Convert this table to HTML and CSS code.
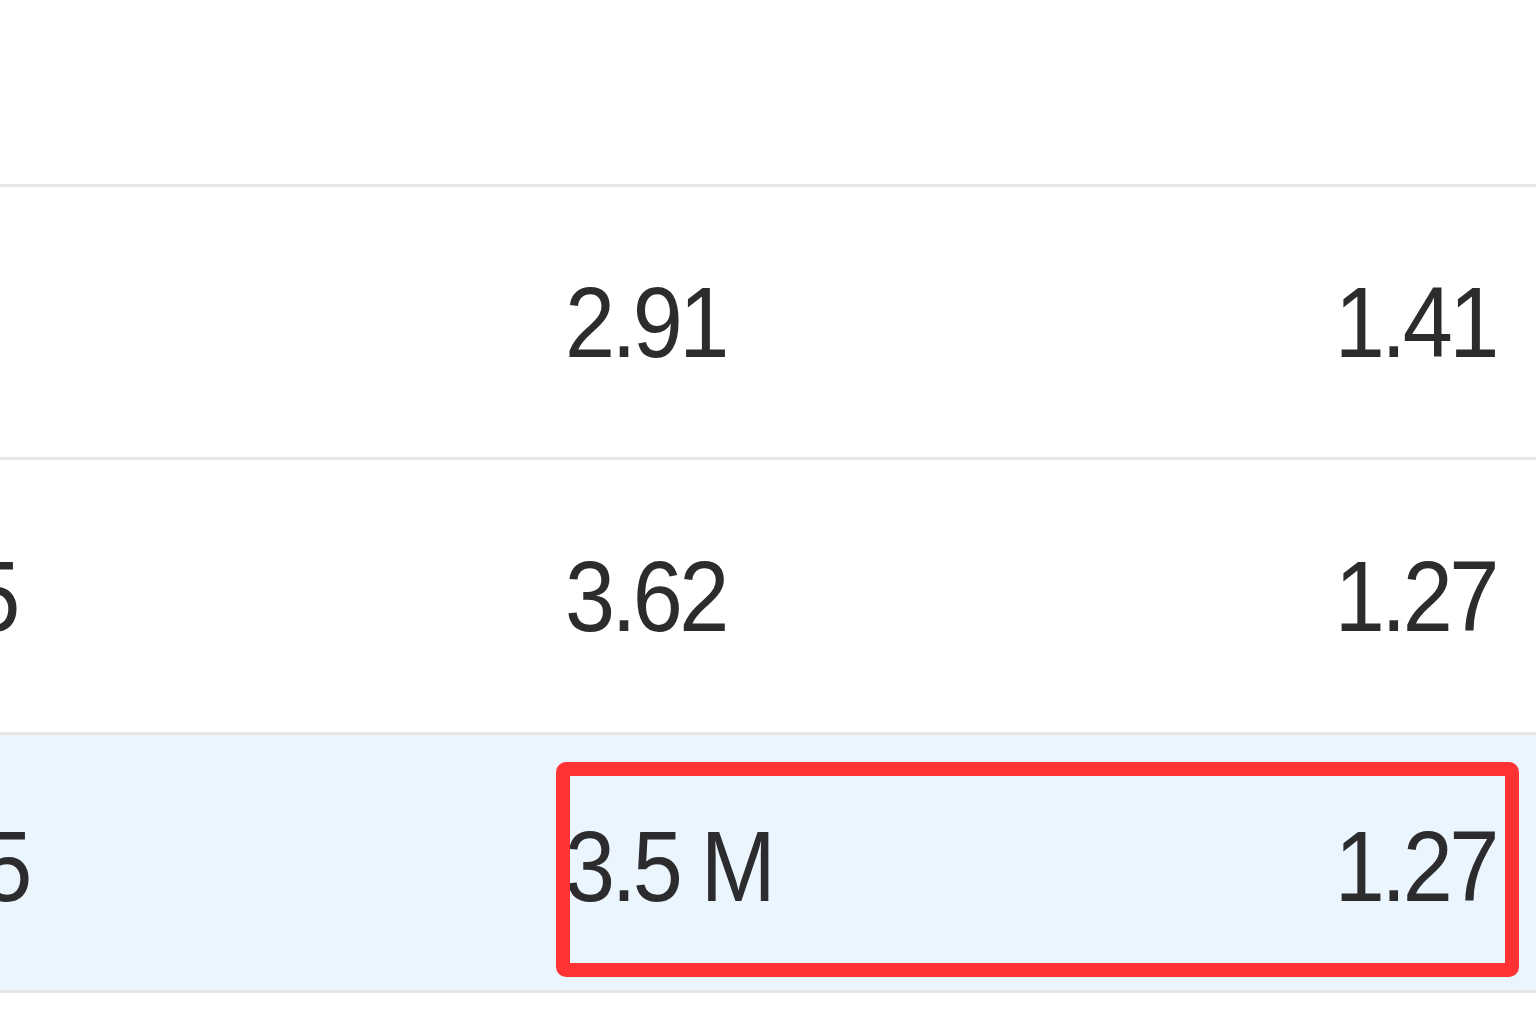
FILE: index.html
```html
<!DOCTYPE html>
<html lang="en">
<head>
<meta charset="utf-8">
<title>Table</title>
<link rel="stylesheet" href="styles.css">
</head>
<body>
<div class="table">
  <div class="row head">
    <div class="cell c1"></div>
    <div class="cell c2"></div>
    <div class="cell c3"></div>
  </div>
  <div class="row r1">
    <div class="cell c1"></div>
    <div class="cell c2"><span class="num">2.91</span></div>
    <div class="cell c3"><span class="num">1.41</span></div>
  </div>
  <div class="row r2">
    <div class="cell c1 shift"><span class="num">1.25</span></div>
    <div class="cell c2"><span class="num">3.62</span></div>
    <div class="cell c3"><span class="num">1.27</span></div>
  </div>
  <div class="row r3 selected">
    <div class="cell c1"><span class="num">1.35</span></div>
    <div class="cell c2"><span class="num">3.5 M</span></div>
    <div class="cell c3"><span class="num">1.27</span></div>
    <div class="highlight"></div>
  </div>
</div>
</body>
</html>
```
FILE: styles.css
```css
html, body {
  margin: 0;
  padding: 0;
  background: #ffffff;
}
body {
  width: 1536px;
  height: 1024px;
  overflow: hidden;
  font-family: "Liberation Sans", Arial, sans-serif;
  color: #2c2c2e;
}
.table {
  display: flex;
  flex-direction: column;
}
.row {
  position: relative;
  display: grid;
  grid-template-columns: 29px 536px auto 1fr;
  align-items: center;
  border-bottom: 3px solid #e6e6e6;
  font-size: 100px;
  line-height: 1;
  letter-spacing: -4px;
}
.head { height: 184px; }
.r1 { height: 270px; }
.r2 { height: 272px; }
.r3 { height: 255px; }
.r3 .cell { padding-top: 6px; }
.selected { background: #ebf5fe; }
.cell { white-space: nowrap; }
.num {
  display: inline-block;
  transform: scaleX(0.9);
  transform-origin: left center;
}
.c1 {
  grid-column: 1;
  display: flex;
  justify-content: flex-end;
}
.c1 .num { transform-origin: right center; }
.c1.shift { padding-right: 12px; }
.c2 { grid-column: 3; }
.c3 {
  grid-column: 4;
  text-align: right;
  padding-right: 40px;
}
.c3 .num { transform-origin: right center; }
.highlight {
  position: absolute;
  left: 556px;
  top: 27px;
  width: 963px;
  height: 215px;
  box-sizing: border-box;
  border: 14px solid #ff3333;
  border-radius: 10px;
}
```
